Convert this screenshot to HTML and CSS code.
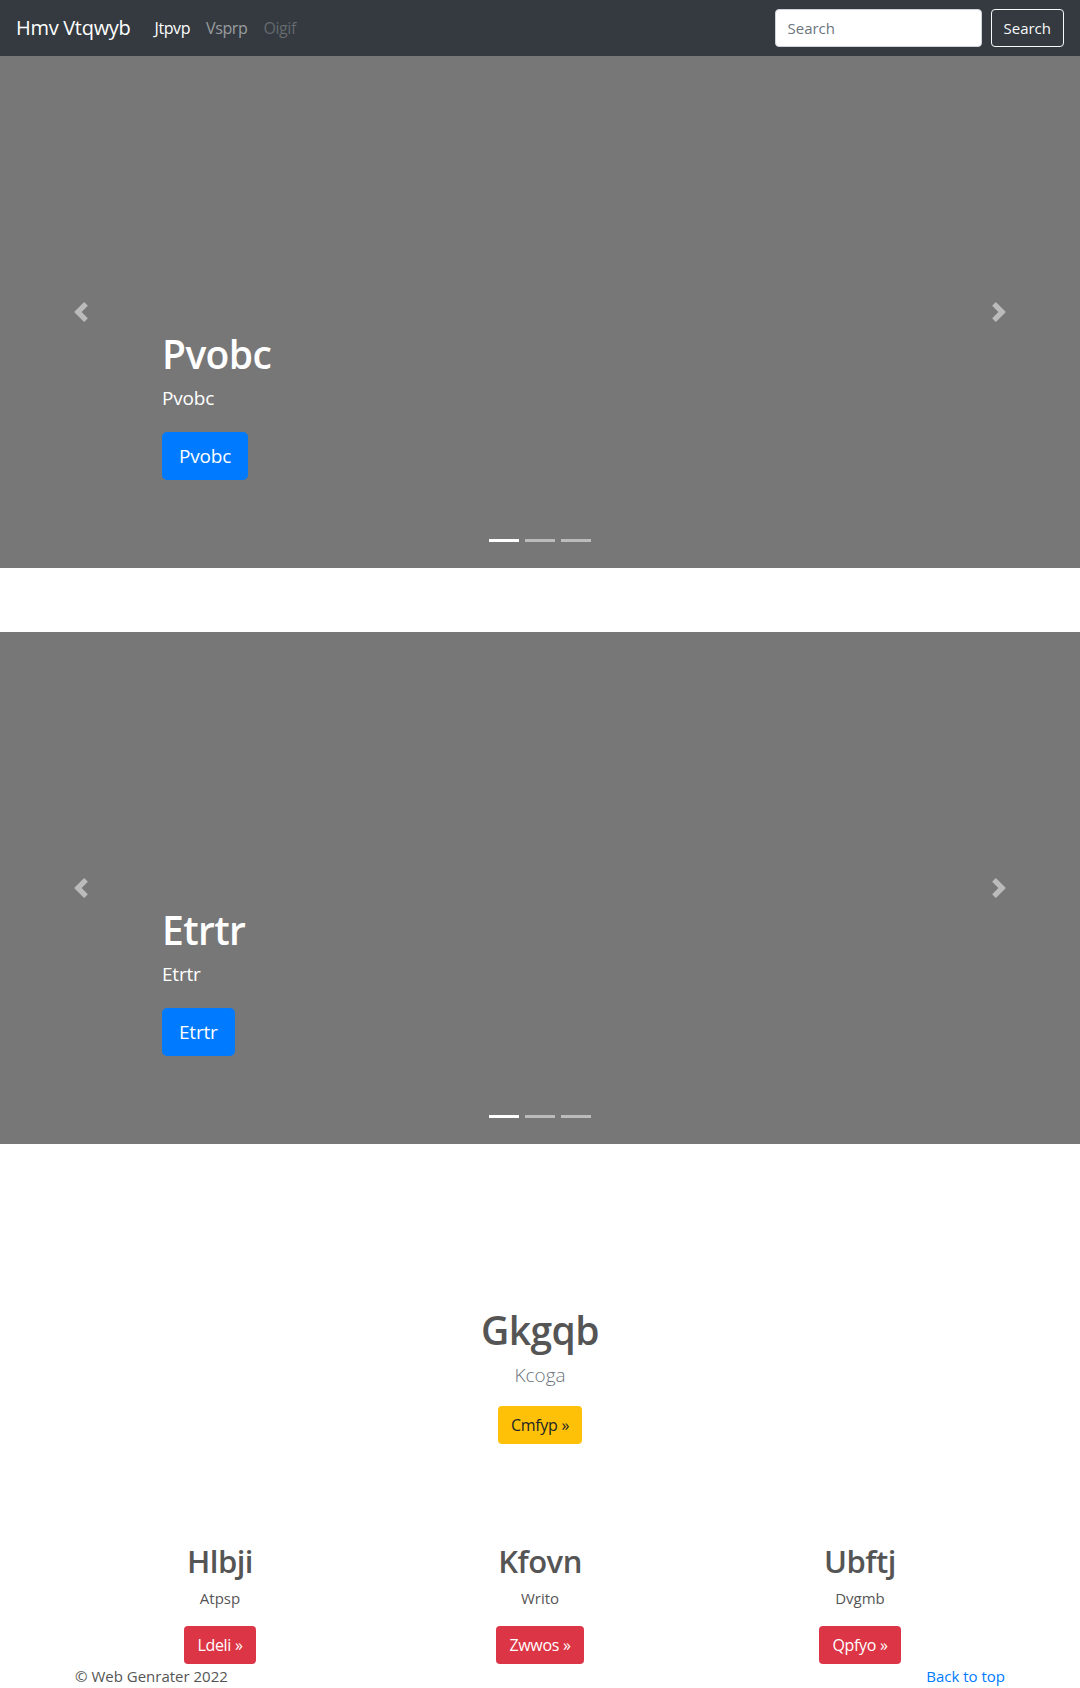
FILE: index.html
```html
<!DOCTYPE html>
<html lang="en">
<head>
<meta charset="utf-8">
<title>Hmv Vtqwyb</title>
<link rel="stylesheet" href="styles.css">
</head>
<body>
<header class="navbar">
  <a class="brand" href="#">Hmv Vtqwyb</a>
  <ul class="nav">
    <li><a class="nav-link active" href="#">Jtpvp</a></li>
    <li><a class="nav-link" href="#">Vsprp</a></li>
    <li><a class="nav-link disabled" href="#">Oigif</a></li>
  </ul>
  <form class="search">
    <input class="search-input" type="text" placeholder="Search">
    <button class="search-btn" type="button">Search</button>
  </form>
</header>

<main>
  <div class="carousel">
    <div class="caption">
      <h1 class="cap-title">Pvobc</h1>
      <p class="cap-text">Pvobc</p>
      <a class="btn btn-lg btn-primary" href="#">Pvobc</a>
    </div>
    <ol class="indicators">
      <li class="active"></li><li></li><li></li>
    </ol>
    <a class="control prev" href="#"><svg viewBox="0 0 8 8" width="20" height="20"><path d="M5.25 0l-4 4 4 4 1.5-1.5L4.25 4l2.5-2.5L5.25 0z"/></svg></a>
    <a class="control next" href="#"><svg viewBox="0 0 8 8" width="20" height="20"><path d="M2.75 0l-1.5 1.5L3.75 4l-2.5 2.5L2.75 8l4-4-4-4z"/></svg></a>
  </div>

  <div class="carousel">
    <div class="caption">
      <h1 class="cap-title">Etrtr</h1>
      <p class="cap-text">Etrtr</p>
      <a class="btn btn-lg btn-primary" href="#">Etrtr</a>
    </div>
    <ol class="indicators">
      <li class="active"></li><li></li><li></li>
    </ol>
    <a class="control prev" href="#"><svg viewBox="0 0 8 8" width="20" height="20"><path d="M5.25 0l-4 4 4 4 1.5-1.5L4.25 4l2.5-2.5L5.25 0z"/></svg></a>
    <a class="control next" href="#"><svg viewBox="0 0 8 8" width="20" height="20"><path d="M2.75 0l-1.5 1.5L3.75 4l-2.5 2.5L2.75 8l4-4-4-4z"/></svg></a>
  </div>

  <section class="intro">
    <h1 class="intro-title">Gkgqb</h1>
    <p class="intro-lead">Kcoga</p>
    <a class="btn btn-warning" href="#">Cmfyp »</a>
  </section>

  <section class="container cols">
    <div class="col">
      <h2 class="col-title">Hlbji</h2>
      <p class="col-text">Atpsp</p>
      <a class="btn btn-danger" href="#">Ldeli »</a>
    </div>
    <div class="col">
      <h2 class="col-title">Kfovn</h2>
      <p class="col-text">Writo</p>
      <a class="btn btn-danger" href="#">Zwwos »</a>
    </div>
    <div class="col">
      <h2 class="col-title">Ubftj</h2>
      <p class="col-text">Dvgmb</p>
      <a class="btn btn-danger" href="#">Qpfyo »</a>
    </div>
  </section>

  <footer class="container footer">
    <p class="copy">© Web Genrater 2022</p>
    <a class="top-link" href="#">Back to top</a>
  </footer>
</main>
</body>
</html>
```

FILE: styles.css
```css
* { box-sizing: border-box; }

body {
  margin: 0;
  font-family: "Open Sans", "Noto Sans", "Liberation Sans", sans-serif;
  font-size: 16px;
  line-height: 1.5;
  color: #212529;
  background: #fff;
}

a { text-decoration: none; }

/* Navbar */
.navbar {
  height: 56px;
  background: #343a40;
  display: flex;
  align-items: center;
  padding: 0 16px;
}
.brand {
  color: #fff;
  font-size: 20px;
  line-height: 30px;
  margin-right: 16px;
  letter-spacing: -0.3px;
}
.nav {
  list-style: none;
  margin: 0;
  padding: 0;
  display: flex;
  flex: 1;
}
.nav-link {
  display: block;
  padding: 8px 8px;
  color: rgba(255,255,255,.5);
  font-size: 16px;
  letter-spacing: -0.4px;
}
.nav-link.active { color: #fff; }
.nav-link.disabled { color: rgba(255,255,255,.25); }

.search { display: flex; align-items: center; }
.search-input {
  width: 207px;
  height: 38px;
  padding: 6px 12px;
  font: inherit;
  font-size: 15px;
  color: #495057;
  background: #fff;
  border: 1px solid #ced4da;
  border-radius: 4px;
  margin-right: 9px;
}
.search-input::placeholder { color: #6c757d; }
.search-btn {
  height: 38px;
  padding: 0 12px;
  font: inherit;
  font-size: 15px;
  color: #f8f9fa;
  background: transparent;
  border: 1px solid #f8f9fa;
  border-radius: 4px;
}

/* Carousel */
.carousel {
  height: 512px;
  background: #777;
  margin-bottom: 64px;
  display: grid;
  grid-template-columns: 15% 1fr 15%;
  grid-template-rows: 1fr;
}
.caption {
  grid-column: 2;
  grid-row: 1;
  align-self: end;
  padding-bottom: 88px;
  color: #fff;
}
.cap-title {
  margin: 0 0 5px;
  font-size: 39px;
  font-weight: 600;
  line-height: 48px;
  letter-spacing: -0.6px;
}
.cap-text {
  margin: 0 0 19px;
  font-size: 19px;
  line-height: 30px;
  letter-spacing: -0.2px;
}
.indicators {
  grid-column: 2;
  grid-row: 1;
  align-self: end;
  justify-self: center;
  list-style: none;
  margin: 0 0 16px;
  padding: 0;
  display: flex;
}
.indicators li {
  width: 30px;
  height: 23px;
  margin: 0 3px;
  border-top: 10px solid transparent;
  border-bottom: 10px solid transparent;
  background: #fff;
  background-clip: padding-box;
  opacity: .5;
}
.indicators li.active { opacity: 1; }
.control {
  grid-row: 1;
  display: flex;
  align-items: center;
  justify-content: center;
  opacity: .5;
  fill: #fff;
}
.control.prev { grid-column: 1; }
.control.next { grid-column: 3; }

/* Buttons */
.btn {
  display: inline-block;
  border-radius: 4px;
  padding: 6px 12px;
  font-size: 16px;
  line-height: 24px;
  border: 1px solid transparent;
  letter-spacing: -0.3px;
}
.btn-lg {
  padding: 8px 16px;
  font-size: 19px;
  line-height: 30px;
  border-radius: 5px;
  letter-spacing: -0.2px;
}
.btn-primary { background: #007bff; color: #fff; }
.btn-warning { background: #ffc107; color: #212529; }
.btn-danger { background: #dc3545; color: #fff; }

/* Intro */
.intro {
  text-align: center;
  padding-top: 98px;
}
.intro-title {
  margin: 0 0 6px;
  font-size: 39px;
  font-weight: 600;
  line-height: 48px;
  color: #555;
  letter-spacing: -0.6px;
}
.intro-lead {
  margin: 0 0 16px;
  font-size: 19px;
  font-weight: 300;
  line-height: 30px;
  color: #6c757d;
}

/* Columns */
.container {
  width: 960px;
  margin: 0 auto;
  padding: 0 15px;
}
.cols {
  display: grid;
  grid-template-columns: repeat(3, 1fr);
  padding: 0;
  margin-top: 98px;
}
.col {
  text-align: center;
  padding: 0 15px;
}
.col-title {
  margin: 0 0 6px;
  font-size: 31px;
  font-weight: 600;
  line-height: 38px;
  color: #555;
  letter-spacing: -0.5px;
}
.col-text {
  margin: 0 0 16px;
  font-size: 15px;
  line-height: 24px;
  color: #555;
}

/* Footer */
.footer {
  display: flex;
  justify-content: space-between;
  align-items: baseline;
  padding-top: 1px;
}
.copy {
  margin: 0;
  font-size: 15px;
  color: #555;
}
.top-link {
  color: #007bff;
  font-size: 15px;
}
```
